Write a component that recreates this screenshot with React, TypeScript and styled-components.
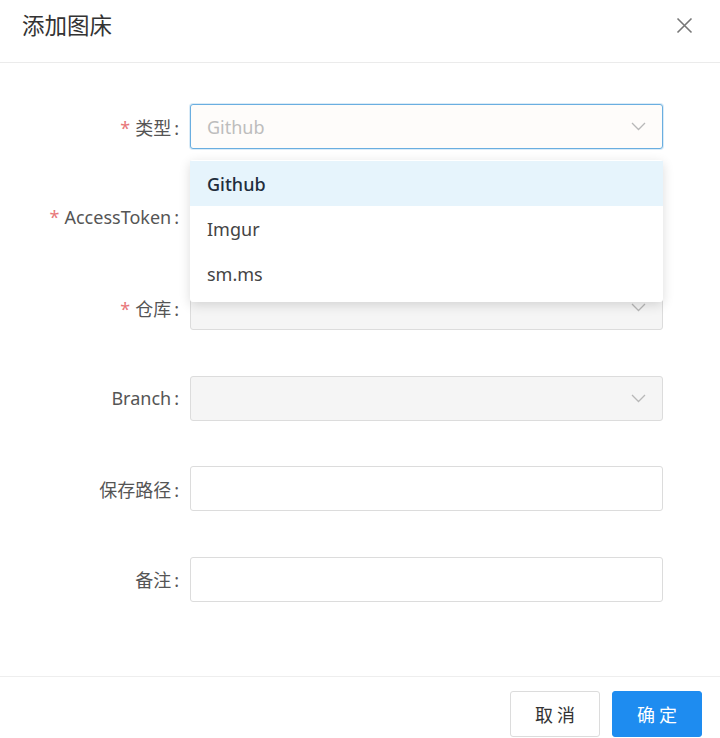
import { createGlobalStyle, styled } from 'styled-components';

const Global = createGlobalStyle`
    html, body {
        margin: 0;
        padding: 0;
        background: #fff;
    }
    body {
        font-family: "Noto Sans", "Noto Sans CJK SC", sans-serif;
        color: #333;
    }
`;

const S = {
    Dialog: styled.div`
        width: 720px;
        height: 738px;
        display: flex;
        flex-direction: column;
        background: #fff;
    `,
    Header: styled.div`
        height: 63px;
        box-sizing: border-box;
        display: flex;
        align-items: center;
        justify-content: space-between;
        padding: 0 22px 13px 22px;
        border-bottom: 1px solid #ebebeb;
    `,
    Title: styled.h2`
        margin: 0;
        font-size: 22.5px;
        font-weight: 400;
        color: #333;
    `,
    Close: styled.button`
        border: none;
        background: none;
        padding: 0;
        width: 24px;
        height: 24px;
        display: grid;
        place-items: center;
        cursor: pointer;
        margin-right: 2px;
        margin-top: 2px;
    `,
    Body: styled.form`
        flex: 1;
        padding: 41px 57px 0 0;
    `,
    Row: styled.div`
        display: flex;
        align-items: center;
        height: 45px;
        margin-bottom: 45.5px;
    `,
    Label: styled.label`
        width: 190px;
        flex: none;
        text-align: right;
        padding-right: 11px;
        box-sizing: border-box;
        font-size: 18px;
        color: #555;
        white-space: nowrap;
    `,
    Colon: styled.span`
        margin-left: 3px;
    `,
    Star: styled.span`
        color: #e8777a;
        margin-right: 5px;
    `,
    Field: styled.div`
        position: relative;
        flex: 1;
        height: 100%;
    `,
    Input: styled.div<{ $focused?: boolean; $disabled?: boolean }>`
        box-sizing: border-box;
        height: 100%;
        display: flex;
        align-items: center;
        justify-content: space-between;
        padding: 0 16px;
        border-radius: 3px;
        border: 1px solid ${(p) => (p.$focused ? '#6aaee0' : '#dcdcdc')};
        box-shadow: ${(p) => (p.$focused ? '0 0 0 1px rgba(106,174,224,0.25)' : 'none')};
        background: ${(p) => (p.$disabled ? '#f5f5f5' : p.$focused ? '#fefcfa' : '#fff')};
        font-size: 18px;
    `,
    Placeholder: styled.span`
        color: #bdbdbd;
    `,
    Menu: styled.ul`
        position: absolute;
        top: 56px;
        left: 0;
        right: 0;
        margin: 0;
        padding: 1px 0 6px;
        list-style: none;
        background: #fff;
        border-radius: 3px;
        box-shadow: 0 3px 12px rgba(0, 0, 0, 0.14);
        z-index: 2;
    `,
    Option: styled.li<{ $active?: boolean }>`
        height: 45px;
        display: flex;
        align-items: center;
        padding-left: 17px;
        font-size: 18px;
        color: ${(p) => (p.$active ? '#1f2d3d' : '#444')};
        font-weight: ${(p) => (p.$active ? 500 : 400)};
        background: ${(p) => (p.$active ? '#e6f4fc' : '#fff')};
    `,
    Footer: styled.div`
        border-top: 1px solid #eee;
        padding: 14px 18px 0 0;
        display: flex;
        justify-content: flex-end;
        gap: 12px;
        height: 62px;
        box-sizing: border-box;
    `,
    Button: styled.button<{ $primary?: boolean }>`
        width: 90px;
        height: 46px;
        border-radius: 3px;
        font-family: "Noto Sans CJK SC", sans-serif;
        font-size: 18px;
        letter-spacing: 4px;
        text-indent: 4px;
        cursor: pointer;
        border: 1px solid ${(p) => (p.$primary ? '#1e8cf0' : '#dcdcdc')};
        background: ${(p) => (p.$primary ? '#1e8cf0' : '#fff')};
        color: ${(p) => (p.$primary ? '#fff' : '#333')};
    `,
};

function Chevron() {
    return (
        <svg width="15" height="9" viewBox="0 0 15 9" fill="none">
            <path d="M1 1l6.5 6.5L14 1" stroke="#b8b8b8" strokeWidth="1.3" />
        </svg>
    );
}

function CloseIcon() {
    return (
        <svg width="17" height="17" viewBox="0 0 17 17" fill="none">
            <path d="M1.5 1.5l14 14M15.5 1.5l-14 14" stroke="#777" strokeWidth="1.6" />
        </svg>
    );
}

type Row = { label: string; required?: boolean; kind: 'select' | 'text'; disabled?: boolean };

const rows: Row[] = [
    { label: 'AccessToken', required: true, kind: 'text' },
    { label: '仓库', required: true, kind: 'select', disabled: true },
    { label: 'Branch', kind: 'select', disabled: true },
    { label: '保存路径', kind: 'text' },
    { label: '备注', kind: 'text' },
];

const options = ['Github', 'Imgur', 'sm.ms'];

export default function App() {
    return (
        <>
            <Global />
            <S.Dialog>
                <S.Header>
                    <S.Title>添加图床</S.Title>
                    <S.Close type="button">
                        <CloseIcon />
                    </S.Close>
                </S.Header>
                <S.Body>
                    <S.Row>
                        <S.Label>
                            <S.Star>*</S.Star>类型<S.Colon>:</S.Colon>
                        </S.Label>
                        <S.Field>
                            <S.Input $focused>
                                <S.Placeholder>Github</S.Placeholder>
                                <Chevron />
                            </S.Input>
                            <S.Menu>
                                {options.map((o, i) => (
                                    <S.Option key={o} $active={i === 0}>
                                        {o}
                                    </S.Option>
                                ))}
                            </S.Menu>
                        </S.Field>
                    </S.Row>
                    {rows.map((r) => (
                        <S.Row key={r.label}>
                            <S.Label>
                                {r.required && <S.Star>*</S.Star>}
                                {r.label}
                                <S.Colon>:</S.Colon>
                            </S.Label>
                            <S.Field>
                                <S.Input $disabled={r.disabled}>
                                    <span />
                                    {r.kind === 'select' && <Chevron />}
                                </S.Input>
                            </S.Field>
                        </S.Row>
                    ))}
                </S.Body>
                <S.Footer>
                    <S.Button type="button">取消</S.Button>
                    <S.Button type="button" $primary>
                        确定
                    </S.Button>
                </S.Footer>
            </S.Dialog>
        </>
    );
}
